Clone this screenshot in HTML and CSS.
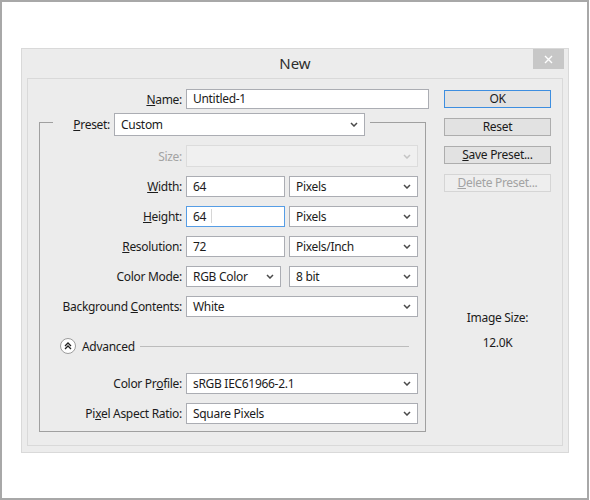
FILE: index.html
```html
<!DOCTYPE html>
<html lang="en">
<head>
    <meta charset="UTF-8">
    <title>New</title>
    <link rel="stylesheet" href="styles.css">
</head>
<body>
    <div class="screen">
        <div class="dialog">
            <div class="titlebar">
                <span class="title">New</span>
                <button class="close">
                    <svg width="9" height="9" viewBox="0 0 9 9"><path d="M1 1 L8 8 M8 1 L1 8" stroke="#fff" stroke-width="1.4" fill="none"/></svg>
                </button>
            </div>

            <div class="panel">
                <div class="form">
                    <div class="name-row">
                        <label class="lbl name-lbl"><u>N</u>ame:</label>
                        <div class="input name-input">Untitled-1</div>
                    </div>

                    <div class="group">
                        <div class="preset">
                            <label class="lbl preset-lbl"><u>P</u>reset:</label>
                            <div class="select preset-select"><span>Custom</span><svg class="chev" width="8" height="5" viewBox="0 0 8 5"><path d="M1 1 L4 4 L7 1"/></svg></div>
                        </div>

                        <div class="field size-row">
                            <label class="lbl disabled">Size:</label>
                            <div class="select full off"><span></span><svg class="chev" width="8" height="5" viewBox="0 0 8 5"><path d="M1 1 L4 4 L7 1"/></svg></div>
                        </div>
                        <div class="field">
                            <label class="lbl"><u>W</u>idth:</label>
                            <div class="input num">64</div>
                            <div class="select unit"><span>Pixels</span><svg class="chev" width="8" height="5" viewBox="0 0 8 5"><path d="M1 1 L4 4 L7 1"/></svg></div>
                        </div>
                        <div class="field">
                            <label class="lbl"><u>H</u>eight:</label>
                            <div class="input num focus">64<span class="ibeam"></span></div>
                            <div class="select unit"><span>Pixels</span><svg class="chev" width="8" height="5" viewBox="0 0 8 5"><path d="M1 1 L4 4 L7 1"/></svg></div>
                        </div>
                        <div class="field">
                            <label class="lbl"><u>R</u>esolution:</label>
                            <div class="input num">72</div>
                            <div class="select unit"><span>Pixels/Inch</span><svg class="chev" width="8" height="5" viewBox="0 0 8 5"><path d="M1 1 L4 4 L7 1"/></svg></div>
                        </div>
                        <div class="field">
                            <label class="lbl">Color Mode:</label>
                            <div class="select mode"><span>RGB Color</span><svg class="chev" width="8" height="5" viewBox="0 0 8 5"><path d="M1 1 L4 4 L7 1"/></svg></div>
                            <div class="select unit depth"><span>8 bit</span><svg class="chev" width="8" height="5" viewBox="0 0 8 5"><path d="M1 1 L4 4 L7 1"/></svg></div>
                        </div>
                        <div class="field">
                            <label class="lbl">Background <u>C</u>ontents:</label>
                            <div class="select full"><span>White</span><svg class="chev" width="8" height="5" viewBox="0 0 8 5"><path d="M1 1 L4 4 L7 1"/></svg></div>
                        </div>

                        <div class="advanced">
                            <svg class="toggle" width="16" height="16" viewBox="0 0 16 16">
                                <circle cx="8" cy="8" r="7.5" fill="#fff" stroke="#9c9c9c"/>
                                <path d="M5 8 L8 5 L11 8 M5 11 L8 8 L11 11" fill="none" stroke="#222" stroke-width="1.3"/>
                            </svg>
                            <span>Advanced</span>
                            <div class="rule"></div>
                        </div>

                        <div class="field profile">
                            <label class="lbl">Color Pr<u>o</u>file:</label>
                            <div class="select full"><span>sRGB IEC61966-2.1</span><svg class="chev" width="8" height="5" viewBox="0 0 8 5"><path d="M1 1 L4 4 L7 1"/></svg></div>
                        </div>
                        <div class="field">
                            <label class="lbl">Pi<u>x</u>el Aspect Ratio:</label>
                            <div class="select full"><span>Square Pixels</span><svg class="chev" width="8" height="5" viewBox="0 0 8 5"><path d="M1 1 L4 4 L7 1"/></svg></div>
                        </div>
                    </div>
                </div>

                <div class="side">
                    <button class="btn default">OK</button>
                    <button class="btn">Reset</button>
                    <button class="btn"><u>S</u>ave Preset...</button>
                    <button class="btn" disabled><u>D</u>elete Preset...</button>

                    <div class="image-size">
                        <div>Image Size:</div>
                        <div class="size-value">12.0K</div>
                    </div>
                </div>
            </div>
        </div>
    </div>
</body>
</html>
```

FILE: styles.css
```css
body {
    margin: 0;
    background-color: #fff;
    font-family: "Noto Sans", "Open Sans", sans-serif;
    font-size: 12px;
    letter-spacing: -0.3px;
    color: #1b1b1b;
}
.screen {
    width: 589px;
    height: 500px;
    box-sizing: border-box;
    border: 2px solid #a8a8a8;
    padding: 46px 0 0 19px;
}
.dialog {
    width: 548px;
    height: 405px;
    box-sizing: border-box;
    background-color: #ececec;
    border: 1px solid #d9d9d9;
    display: flex;
    flex-direction: column;
}
.titlebar {
    height: 29px;
    display: grid;
    grid-template-columns: 1fr auto 1fr;
    align-items: start;
}
.title {
    grid-column: 2;
    font-size: 15px;
    letter-spacing: 0;
    line-height: 29px;
    color: #2e2e2e;
}
.close {
    grid-column: 3;
    justify-self: end;
    width: 31px;
    height: 20px;
    margin-right: 4px;
    padding: 0;
    border: none;
    background-color: #c7c7c7;
    display: flex;
    align-items: center;
    justify-content: center;
}
.panel {
    flex: 1;
    margin: 0 5px 6px 5px;
    border: 1px solid #d9d9d9;
    padding: 10px 0 0 11px;
    display: flex;
}
.form {
    width: 390px;
    flex-shrink: 0;
}
.lbl {
    width: 142px;
    flex-shrink: 0;
    text-align: right;
    white-space: nowrap;
}
.disabled {
    color: #a3a3a3;
}
.name-row {
    display: flex;
    align-items: center;
    gap: 4px;
    height: 20px;
}
.name-lbl {
    width: 143px;
}
.input {
    box-sizing: border-box;
    flex-shrink: 0;
    height: 21px;
    line-height: 19px;
    padding: 0 6px;
    background-color: #fff;
    border: 1px solid #abadb3;
    white-space: nowrap;
}
.name-input {
    width: 243px;
    height: 20px;
    line-height: 18px;
}
.num {
    width: 99px;
    position: relative;
}
.focus {
    border-color: #569de5;
}
.ibeam {
    position: absolute;
    left: 24px;
    top: 2px;
    width: 1px;
    height: 14px;
    background-color: #d6d6d6;
}
.group {
    width: 387px;
    box-sizing: border-box;
    margin-top: 13px;
    border: 1px solid #a0a0a0;
    padding: 0 0 7px 0;
}
.preset {
    width: 317px;
    height: 23px;
    box-sizing: border-box;
    margin: -10px 0 0 13px;
    padding-right: 5px;
    background-color: #ececec;
    display: flex;
    align-items: center;
    gap: 4px;
}
.preset-lbl {
    width: 57px;
}
.select {
    box-sizing: border-box;
    flex-shrink: 0;
    height: 21px;
    padding: 0 6px 0 6px;
    background-color: #fff;
    border: 1px solid #abadb3;
    display: flex;
    align-items: center;
    justify-content: space-between;
    white-space: nowrap;
}
.chev {
    flex-shrink: 0;
}
.chev path {
    fill: none;
    stroke: #4a4a4a;
    stroke-width: 1.5;
}
.preset-select {
    width: 251px;
    height: 23px;
}
.off {
    background-color: #f0f0f0;
    border-color: #dcdcdc;
}
.off .chev path {
    stroke: #c4c4c4;
}
.field {
    display: flex;
    align-items: center;
    gap: 4px;
    height: 21px;
    margin-top: 9px;
}
.size-row {
    height: 22px;
}
.size-row .select {
    height: 22px;
}
.full {
    width: 232px;
}
.unit {
    width: 129px;
}
.mode {
    width: 95px;
}
.depth {
    margin-left: 4px;
}
.advanced {
    display: flex;
    align-items: center;
    height: 16px;
    margin-top: 21px;
    padding-left: 20px;
}
.advanced span {
    margin-left: 6px;
}
.rule {
    flex: 1;
    height: 1px;
    margin: 0 16px 0 5px;
    background-color: #bcbcbc;
}
.profile {
    margin-top: 19px;
}
.side {
    width: 107px;
    margin-left: 15px;
    padding-top: 1px;
    display: flex;
    flex-direction: column;
    gap: 10px;
}
.btn {
    height: 18px;
    padding: 0;
    font-family: inherit;
    font-size: 12px;
    letter-spacing: -0.3px;
    line-height: 16px;
    color: #1b1b1b;
    background-color: #e2e2e2;
    border: 1px solid #adadad;
}
.btn.default {
    border-color: #3d8ee0;
}
.btn:disabled {
    color: #a3a3a3;
    background-color: #eeeeee;
    border-color: #d5d5d5;
}
.image-size {
    margin-top: 108px;
    text-align: center;
    line-height: 16px;
}
.size-value {
    margin-top: 9px;
}
```
